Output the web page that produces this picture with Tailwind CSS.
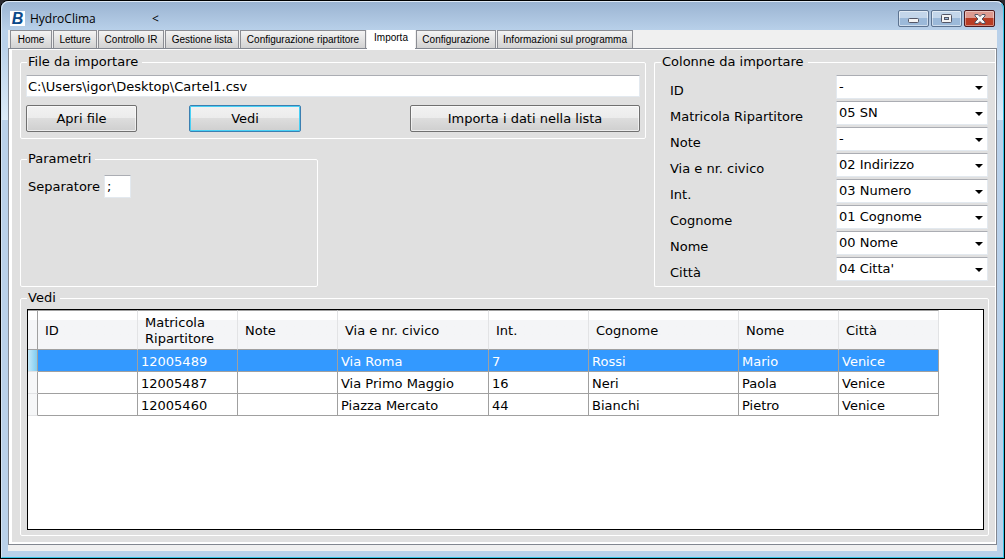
<!DOCTYPE html>
<html lang="it">
<head>
<meta charset="utf-8">
<meta name="viewport" content="width=device-width, initial-scale=1">
<title>HydroClima</title>
<script src="https://cdn.jsdelivr.net/npm/@tailwindcss/browser@4"></script>
</head>
<body class="bg-[#2a2a30] font-['Verdana','DejaVu_Sans',sans-serif] text-[13px] leading-4 text-black">
<div class="flex min-h-screen flex-col rounded-t-lg border border-black bg-[linear-gradient(#9ab3d1,#b9d1ea_30px,#b9d1ea_45px,#dcebf8_119px,#b9d1ea_119px)]">
<div class="flex flex-1 flex-col rounded-t-lg border-t border-l border-r border-b border-t-[#dfe9f5] border-l-[#d5e4f3] border-r-[#35c3e6] border-b-[#35c3e6] px-[6px] pb-[6px]">

  <header class="flex h-7 items-start">
    <span class="mt-[9px] ml-[2px] flex h-[15px] w-[15px] items-center justify-center bg-white font-['Liberation_Sans',sans-serif] text-[16px] leading-none font-bold text-[#0b4a8a] italic">B</span>
    <h1 class="mt-[9px] ml-[5px] w-[122px] font-['Open_Sans',sans-serif] text-[12px] leading-4">HydroClima</h1>
    <span class="mt-[9px] font-['Open_Sans',sans-serif] text-[12px] leading-4">&lt;</span>
    <div class="mt-2 mr-[2px] ml-auto flex gap-[2px]">
      <button aria-label="Riduci a icona" class="flex h-[17px] w-[31px] items-center justify-center rounded-xs border border-[#5c7390] bg-linear-to-b from-[#c3d6ea] from-50% to-[#9bb9d9] to-50% inset-ring inset-ring-white/50">
        <svg class="mt-[4px]" width="11" height="5" viewBox="0 0 11 5"><rect x=".5" y=".5" width="10" height="4" rx="1" fill="#f4f4f4" stroke="#535666"/></svg>
      </button>
      <button aria-label="Ingrandisci" class="flex h-[17px] w-[31px] items-center justify-center rounded-xs border border-[#5c7390] bg-linear-to-b from-[#c3d6ea] from-50% to-[#9bb9d9] to-50% inset-ring inset-ring-white/50">
        <svg width="11" height="9" viewBox="0 0 11 9"><rect x=".5" y=".5" width="10" height="8" rx="1" fill="#f4f4f4" stroke="#535666"/><rect x="3.500" y="3.500" width="4" height="2" fill="#9bb9d9" stroke="#535666"/></svg>
      </button>
      <button aria-label="Chiudi" class="flex h-[17px] w-[31px] items-center justify-center rounded-xs border border-[#4d1b20] bg-linear-to-b from-[#dd9a90] from-50% to-[#b93c24] to-50% inset-ring inset-ring-white/40">
        <svg width="12" height="10" viewBox="0 0 12 10"><path d="M1 .5h3l2 2 2-2h3v1.500L8 5l3 3v1.500H8l-2-2-2 2H1V8l3-3-3-3z" fill="#f6f6f6" stroke="#535666"/></svg>
      </button>
    </div>
  </header>

  <div class="flex flex-1 flex-col bg-[#f0f0f0] pb-[6px]">
    <div role="tablist" class="flex h-[18px] items-end gap-px pl-[2px] font-['Liberation_Sans',sans-serif] text-[10px] whitespace-nowrap">
      <button role="tab" class="h-[18px] w-[42px] border border-b-0 border-[#8c8e94] bg-linear-to-b from-[#f3f3f3] to-[#d2d2d2]">Home</button>
      <button role="tab" class="h-[18px] w-[44px] border border-b-0 border-[#8c8e94] bg-linear-to-b from-[#f3f3f3] to-[#d2d2d2]">Letture</button>
      <button role="tab" class="h-[18px] w-[66px] border border-b-0 border-[#8c8e94] bg-linear-to-b from-[#f3f3f3] to-[#d2d2d2]">Controllo IR</button>
      <button role="tab" class="h-[18px] w-[74px] border border-b-0 border-[#8c8e94] bg-linear-to-b from-[#f3f3f3] to-[#d2d2d2]">Gestione lista</button>
      <button role="tab" class="h-[18px] w-[126px] border border-b-0 border-[#8c8e94] bg-linear-to-b from-[#f3f3f3] to-[#d2d2d2]">Configurazione ripartitore</button>
      <button role="tab" aria-selected="true" class="z-10 -mb-px h-[19px] w-[48px] bg-white pb-[3px]">Importa</button>
      <button role="tab" class="h-[18px] w-[80px] border border-b-0 border-[#8c8e94] bg-linear-to-b from-[#f3f3f3] to-[#d2d2d2]">Configurazione</button>
      <button role="tab" class="h-[18px] w-[136px] border border-b-0 border-[#8c8e94] bg-linear-to-b from-[#f3f3f3] to-[#d2d2d2]">Informazioni sul programma</button>
    </div>

    <main class="flex flex-1 flex-col border border-[#828790] bg-white pt-px pr-px pb-[2px] pl-[3px]">
      <div class="flex flex-1 flex-col gap-[3px] bg-[#e0e0e0] pt-1 pb-[6px] pl-2">
        <div class="flex gap-2">
          <div class="flex flex-1 flex-col gap-3">
            <fieldset class="rounded-xs border border-white px-[5px] pb-[6px]">
              <legend class="ml-px pr-1 pl-px">File da importare</legend>
              <input aria-label="File da importare" value="C:\Users\igor\Desktop\Cartel1.csv" class="mt-[5px] block h-[22px] w-full border border-[#e3e9ef] border-t-[#abadb3] bg-white px-px">
              <div class="mt-2 flex">
                <button class="h-[27px] w-[111px] rounded-xs border border-[#707070] bg-[linear-gradient(#f2f2f2,#ebebeb_50%,#dddddd_50%,#cfcfcf)] inset-ring inset-ring-white/60">Apri file</button>
                <button class="ml-[52px] h-[27px] w-[112px] rounded-xs border border-[#3c7fb1] bg-[linear-gradient(#f2f2f2,#ebebeb_50%,#dddddd_50%,#cfcfcf)] inset-ring inset-ring-[#48d0f5]">Vedi</button>
                <button class="ml-auto h-[27px] w-[230px] rounded-xs border border-[#707070] bg-[linear-gradient(#f2f2f2,#ebebeb_50%,#dddddd_50%,#cfcfcf)] inset-ring inset-ring-white/60">Importa i dati nella lista</button>
              </div>
            </fieldset>
            <fieldset class="w-[298px] flex-1 rounded-xs border border-white px-[7px]">
              <legend class="-ml-px pr-1 pl-px">Parametri</legend>
              <div class="mt-2 flex items-center gap-1">
                <label for="sep">Separatore</label>
                <input id="sep" value=";" class="h-[23px] w-[27px] border border-[#e3e9ef] border-t-[#abadb3] bg-white px-[2px]">
              </div>
            </fieldset>
          </div>

          <fieldset class="w-[341px] rounded-l-xs border border-r-0 border-white pr-[7px] pb-[5px] pl-[15px]">
            <legend class="-ml-[9px] pr-1 pl-px">Colonne da importare</legend>
            <div class="mt-[5px] grid grid-cols-[1fr_152px] gap-y-[2px]">
              <label for="c1" class="mt-2">ID</label>
              <div class="relative"><select id="c1" class="block h-6 w-full appearance-none border border-[#e3e9ef] border-t-[#abadb3] bg-white pb-px pl-[2px]"><option>-</option></select><svg class="pointer-events-none absolute top-[11px] right-[5px]" width="8" height="4"><path d="M0 0h8L4 4z"/></svg></div>
              <label for="c2" class="mt-2">Matricola Ripartitore</label>
              <div class="relative"><select id="c2" class="block h-6 w-full appearance-none border border-[#e3e9ef] border-t-[#abadb3] bg-white pb-px pl-[2px]"><option>05 SN</option></select><svg class="pointer-events-none absolute top-[11px] right-[5px]" width="8" height="4"><path d="M0 0h8L4 4z"/></svg></div>
              <label for="c3" class="mt-2">Note</label>
              <div class="relative"><select id="c3" class="block h-6 w-full appearance-none border border-[#e3e9ef] border-t-[#abadb3] bg-white pb-px pl-[2px]"><option>-</option></select><svg class="pointer-events-none absolute top-[11px] right-[5px]" width="8" height="4"><path d="M0 0h8L4 4z"/></svg></div>
              <label for="c4" class="mt-2">Via e nr. civico</label>
              <div class="relative"><select id="c4" class="block h-6 w-full appearance-none border border-[#e3e9ef] border-t-[#abadb3] bg-white pb-px pl-[2px]"><option>02 Indirizzo</option></select><svg class="pointer-events-none absolute top-[11px] right-[5px]" width="8" height="4"><path d="M0 0h8L4 4z"/></svg></div>
              <label for="c5" class="mt-2">Int.</label>
              <div class="relative"><select id="c5" class="block h-6 w-full appearance-none border border-[#e3e9ef] border-t-[#abadb3] bg-white pb-px pl-[2px]"><option>03 Numero</option></select><svg class="pointer-events-none absolute top-[11px] right-[5px]" width="8" height="4"><path d="M0 0h8L4 4z"/></svg></div>
              <label for="c6" class="mt-2">Cognome</label>
              <div class="relative"><select id="c6" class="block h-6 w-full appearance-none border border-[#e3e9ef] border-t-[#abadb3] bg-white pb-px pl-[2px]"><option>01 Cognome</option></select><svg class="pointer-events-none absolute top-[11px] right-[5px]" width="8" height="4"><path d="M0 0h8L4 4z"/></svg></div>
              <label for="c7" class="mt-2">Nome</label>
              <div class="relative"><select id="c7" class="block h-6 w-full appearance-none border border-[#e3e9ef] border-t-[#abadb3] bg-white pb-px pl-[2px]"><option>00 Nome</option></select><svg class="pointer-events-none absolute top-[11px] right-[5px]" width="8" height="4"><path d="M0 0h8L4 4z"/></svg></div>
              <label for="c8" class="mt-2">Città</label>
              <div class="relative"><select id="c8" class="block h-6 w-full appearance-none border border-[#e3e9ef] border-t-[#abadb3] bg-white pb-px pl-[2px]"><option>04 Citta'</option></select><svg class="pointer-events-none absolute top-[11px] right-[5px]" width="8" height="4"><path d="M0 0h8L4 4z"/></svg></div>
            </div>
          </fieldset>
        </div>

        <fieldset class="mr-[6px] flex-1 rounded-xs border border-white pr-1 pb-[5px] pl-[6px]">
          <legend class="pr-1 pl-px">Vedi</legend>
          <div class="mt-[3px] min-h-[221px] border border-black bg-white">
            <table class="w-[911px] table-fixed border-separate border-spacing-0 text-left">
              <colgroup><col class="w-[10px]"><col class="w-[100px]"><col class="w-[100px]"><col class="w-[100px]"><col class="w-[151px]"><col class="w-[100px]"><col class="w-[150px]"><col class="w-[100px]"><col class="w-[100px]"></colgroup>
              <thead>
                <tr class="h-10 [&>th]:border-t [&>th]:border-r [&>th]:border-b [&>th]:border-t-[#a0a0a0] [&>th]:border-r-[#e2e3e5] [&>th]:border-b-[#a0a0a0] [&>th]:bg-linear-to-b [&>th]:from-white [&>th]:from-25% [&>th]:to-[#f4f5f7] [&>th]:to-25% [&>th]:px-[7px] [&>th]:pt-[2px] [&>th]:pb-0 [&>th]:font-normal">
                  <th class="border-r-[#a0a0a0]!"></th><th>ID</th><th>Matricola Ripartitore</th><th>Note</th><th>Via e nr. civico</th><th>Int.</th><th>Cognome</th><th>Nome</th><th>Città</th>
                </tr>
              </thead>
              <tbody class="[&_td]:h-[22px] [&_td]:border-r [&_td]:border-b [&_td]:border-[#a0a0a0] [&_td]:px-[3px] [&_td]:pt-[2px] [&_td]:pb-0 [&_td:first-child]:border-b-[#e2e3e5]">
                <tr class="bg-[#3399ff] text-white"><td class="bg-linear-to-r from-[#c4e8f8] to-[#7fcdf0]"></td><td></td><td>12005489</td><td></td><td>Via Roma</td><td>7</td><td>Rossi</td><td>Mario</td><td>Venice</td></tr>
                <tr><td class="bg-[#f6f7f8]"></td><td></td><td>12005487</td><td></td><td>Via Primo Maggio</td><td>16</td><td>Neri</td><td>Paola</td><td>Venice</td></tr>
                <tr><td class="bg-[#f6f7f8]"></td><td></td><td>12005460</td><td></td><td>Piazza Mercato</td><td>44</td><td>Bianchi</td><td>Pietro</td><td>Venice</td></tr>
              </tbody>
            </table>
          </div>
        </fieldset>
      </div>
    </main>
  </div>
</div>
</div>
</body>
</html>
